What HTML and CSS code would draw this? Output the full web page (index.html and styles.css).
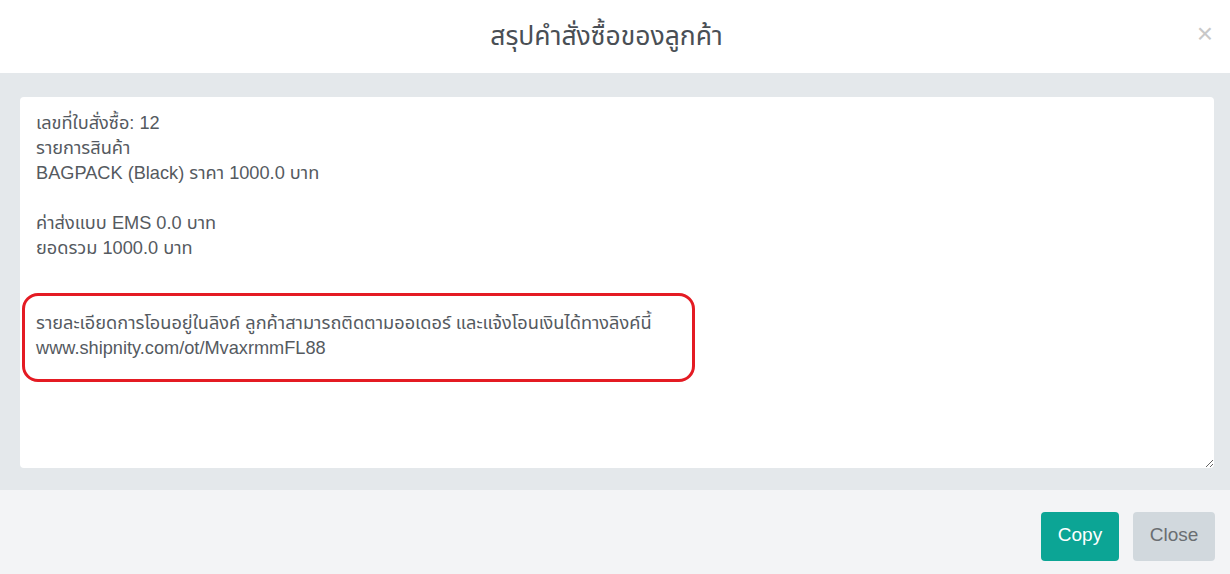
FILE: index.html
```html
<!DOCTYPE html>
<html lang="th">
<head>
<meta charset="utf-8">
<link rel="stylesheet" href="styles.css">
</head>
<body>
<div class="modal">
  <header class="modal-header">
    <h1 class="modal-title">สรุปคำสั่งซื้อของลูกค้า</h1>
    <span class="modal-close">&times;</span>
  </header>
  <section class="modal-body">
    <div class="field">
<textarea class="summary" spellcheck="false">เลขที่ใบสั่งซื้อ: 12
รายการสินค้า
BAGPACK (Black) ราคา 1000.0 บาท

ค่าส่งแบบ EMS 0.0 บาท
ยอดรวม 1000.0 บาท


รายละเอียดการโอนอยู่ในลิงค์ ลูกค้าสามารถติดตามออเดอร์ และแจ้งโอนเงินได้ทางลิงค์นี้
www.shipnity.com/ot/MvaxrmmFL88</textarea>
      <div class="highlight"></div>
    </div>
  </section>
  <footer class="modal-footer">
    <button class="btn btn-copy">Copy</button>
    <button class="btn btn-close">Close</button>
  </footer>
</div>
</body>
</html>
```

FILE: styles.css
```css
html, body {
  margin: 0;
  padding: 0;
}
body {
  width: 1230px;
  height: 574px;
  overflow: hidden;
  font-family: "Liberation Sans", "Noto Sans Thai", "Noto Sans", sans-serif;
  background: #fff;
}
.modal {
  display: flex;
  flex-direction: column;
  height: 574px;
}
.modal-header {
  height: 73px;
  display: flex;
  align-items: center;
  justify-content: center;
  position: relative;
  background: #fff;
  padding-right: 17px;
}
.modal-title {
  margin: 0;
  font-weight: normal;
  font-size: 26.5px;
  color: #4a4f55;
}
.modal-close {
  position: absolute;
  right: 17px;
  top: 19px;
  font-size: 28px;
  line-height: 30px;
  color: #c8c8c8;
}
.modal-body {
  background: #e4e8eb;
  padding: 24px 16px 22px 20px;
  height: 417px;
  box-sizing: border-box;
}
.field {
  position: relative;
  height: 371px;
}
.summary {
  display: block;
  width: 100%;
  height: 100%;
  box-sizing: border-box;
  border: none;
  border-radius: 4px;
  background: #fff;
  padding: 14px 16px 13px;
  margin: 0;
  font-family: "Liberation Sans", "Noto Sans Thai", "Noto Sans", sans-serif;
  font-size: 18.2px;
  line-height: 25px;
  color: #555a5f;
  outline: none;
  overflow: hidden;
  resize: vertical;
}
.highlight {
  position: absolute;
  left: 2px;
  top: 196px;
  width: 673px;
  height: 89px;
  border: 3px solid #e41b23;
  border-radius: 16px;
  box-sizing: border-box;
  pointer-events: none;
}
.modal-footer {
  flex: 1;
  background: #f3f4f6;
  display: flex;
  justify-content: flex-end;
  align-items: flex-start;
  padding: 22px 15px 0 0;
  gap: 14px;
}
.btn {
  height: 49px;
  border: none;
  border-radius: 4px;
  font-family: "Liberation Sans", sans-serif;
  font-size: 19px;
  padding: 0 0 4px;
  cursor: pointer;
}
.btn-copy {
  width: 78px;
  background: #0ca595;
  color: #fff;
}
.btn-close {
  width: 82px;
  background: #d1d8dd;
  color: #6a6e72;
}
```
